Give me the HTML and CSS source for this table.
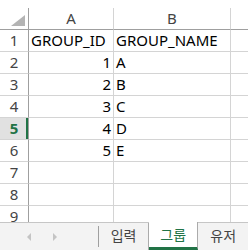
FILE: index.html
```html
<!DOCTYPE html>
<html lang="ko">
<head>
<meta charset="UTF-8">
<title>그룹</title>
<link rel="stylesheet" href="styles.css">
</head>
<body>
<div class="sheet">
    <div class="grid">
        <div class="row head">
            <div class="corner"><span class="tri"></span></div>
            <div class="col">A</div>
            <div class="col">B</div>
            <div class="col"></div>
        </div>
        <div class="row">
            <div class="num">1</div>
            <div class="cell">GROUP_ID</div>
            <div class="cell">GROUP_NAME</div>
            <div class="cell"></div>
        </div>
        <div class="row">
            <div class="num">2</div>
            <div class="cell n">1</div>
            <div class="cell">A</div>
            <div class="cell"></div>
        </div>
        <div class="row">
            <div class="num">3</div>
            <div class="cell n">2</div>
            <div class="cell">B</div>
            <div class="cell"></div>
        </div>
        <div class="row">
            <div class="num">4</div>
            <div class="cell n">3</div>
            <div class="cell">C</div>
            <div class="cell"></div>
        </div>
        <div class="row">
            <div class="num sel">5</div>
            <div class="cell n">4</div>
            <div class="cell">D</div>
            <div class="cell"></div>
        </div>
        <div class="row">
            <div class="num">6</div>
            <div class="cell n">5</div>
            <div class="cell">E</div>
            <div class="cell"></div>
        </div>
        <div class="row">
            <div class="num">7</div>
            <div class="cell"></div>
            <div class="cell"></div>
            <div class="cell"></div>
        </div>
        <div class="row">
            <div class="num">8</div>
            <div class="cell"></div>
            <div class="cell"></div>
            <div class="cell"></div>
        </div>
        <div class="row">
            <div class="num">9</div>
            <div class="cell"></div>
            <div class="cell"></div>
            <div class="cell"></div>
        </div>
    </div>
    <div class="tabbar">
        <div class="nav">
            <span class="arrow left"></span>
            <span class="arrow right"></span>
        </div>
        <div class="tab">입력</div>
        <div class="tab active">그룹</div>
        <div class="tab last">유저</div>
    </div>
</div>
</body>
</html>
```

FILE: styles.css
```css
html, body {
    margin: 0;
    padding: 0;
    background: #fff;
    overflow: hidden;
}
.sheet {
    width: 248px;
    height: 250px;
    display: flex;
    flex-direction: column;
    font-family: "Noto Sans", "Noto Sans CJK KR", sans-serif;
    font-size: 15px;
    color: #000;
}
.grid {
    flex: 1;
    overflow: hidden;
    padding-top: 8px;
}
.row {
    display: grid;
    grid-template-columns: 29px 85px 117px 1fr;
    height: 22px;
}
.row > div {
    box-sizing: border-box;
    border-right: 1px solid #d4d4d4;
    border-bottom: 1px solid #d4d4d4;
    line-height: 21px;
    white-space: nowrap;
    overflow: hidden;
}
.head > div {
    border-bottom-color: #9f9f9f;
    text-align: center;
    color: #444;
}
.head .col:last-child {
    border-right: none;
}
.corner {
    position: relative;
}
.row > .corner,
.row > .num {
    border-right-color: #9f9f9f;
}
.tri {
    position: absolute;
    right: 3px;
    bottom: 3px;
    width: 0;
    height: 0;
    border-left: 14px solid transparent;
    border-bottom: 11px solid #b4b4b4;
}
.num {
    text-align: center;
    color: #444;
}
.num.sel {
    background: #e1e1e1;
    color: #217346;
    font-weight: bold;
    box-shadow: inset -2px 0 0 #217346;
}
.cell {
    padding: 0 2px;
}
.cell.n {
    text-align: right;
}
.row .cell:last-child {
    border-right: none;
}

/* sheet tabs */
.tabbar {
    height: 28px;
    box-sizing: border-box;
    border-top: 1px solid #c6c6c6;
    background: #f3f3f3;
    display: flex;
    font-size: 14px;
}
.nav {
    width: 100px;
    display: flex;
    align-items: center;
    gap: 22px;
    padding-left: 27px;
    box-sizing: border-box;
    position: relative;
}
.nav::after {
    content: "";
    position: absolute;
    right: 0;
    top: 3px;
    bottom: 3px;
    width: 1px;
    background: #9f9f9f;
}
.arrow {
    width: 0;
    height: 0;
    border-top: 4px solid transparent;
    border-bottom: 4px solid transparent;
}
.arrow.left {
    border-right: 4px solid #c4c4c4;
}
.arrow.right {
    border-left: 4px solid #c4c4c4;
}
.tab {
    width: 50px;
    text-align: center;
    line-height: 26px;
    color: #444;
    box-sizing: border-box;
    border-right: 1px solid #ababab;
}
.tab.active {
    background: #fff;
    color: #217346;
    margin-top: -1px;
    border-bottom: 3px solid #217346;
    line-height: 24px;
    padding-top: 1px;
}
.tab.last {
    border-right: none;
}
```
